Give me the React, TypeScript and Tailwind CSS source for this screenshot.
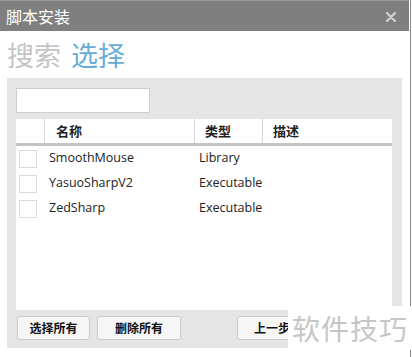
import React from "react";

const rows = [
  { name: "SmoothMouse", type: "Library" },
  { name: "YasuoSharpV2", type: "Executable" },
  { name: "ZedSharp", type: "Executable" },
];

const cjk = "font-['Noto_Sans_CJK_SC',sans-serif]";
const latin = "font-['Open_Sans','Noto_Sans_CJK_SC',sans-serif]";

export default function App() {
  return (
    <div className={`relative w-[412px] h-[357px] bg-white overflow-hidden flex ${cjk}`}>
      <div className="w-[409px] flex flex-col">
        {/* title bar */}
        <div className="h-[31px] bg-[#7f7f7f] border-t border-[#9a9a9a] flex items-center justify-between pl-[6px] pr-[13px]">
          <span className="text-white text-[16px] leading-none">脚本安装</span>
          <svg width="10" height="10" viewBox="0 0 10 10" className="mt-[1px]">
            <path d="M1 1 L9 9 M9 1 L1 9" stroke="#d2d2d2" strokeWidth="2.2" strokeLinecap="round" />
          </svg>
        </div>

        {/* tabs */}
        <div className="h-[47px] flex items-center gap-[10px] pl-[7px] text-[27px] leading-none">
          <span className="text-[#c4c4c4]">搜索</span>
          <span className="text-[#68acd6]">选择</span>
        </div>

        {/* panel */}
        <div className="ml-[7px] w-[395px] h-[270px] bg-[#e5e5e5] pl-[9px] pt-[10px] flex flex-col">
          <div className="w-[134px] h-[25px] bg-white border border-[#cfcfcf]" />

          <div className="mt-[6px] w-[376px] h-[191px] bg-white flex flex-col">
            <div className="h-[27px] flex border-b-[3px] border-[#c4c4c4] text-[13px] font-bold text-[#222]">
              <div className="w-[29px] border-r border-[#d8d8d8]" />
              <div className="w-[150px] border-r border-[#d8d8d8] pl-[11px] flex items-center">名称</div>
              <div className="w-[68px] border-r border-[#d8d8d8] pl-[10px] flex items-center">类型</div>
              <div className="flex-1 pl-[10px] flex items-center">描述</div>
            </div>
            {rows.map((r) => (
              <div key={r.name} className={`h-[25px] flex items-center text-[12.5px] text-[#222] ${latin}`}>
                <div className="w-[29px] pl-[3px]">
                  <div className="w-[18px] h-[18px] border border-[#dcdcdc] bg-white" />
                </div>
                <div className="w-[150px] pl-[4px]">{r.name}</div>
                <div className="w-[68px] pl-[4px]">{r.type}</div>
                <div className="flex-1" />
              </div>
            ))}
          </div>

          <div className="mt-[6px] flex text-[12px] font-bold text-[#111]">
            <button className="w-[73px] h-[24px] ml-[1px] rounded-[3px] border border-[#cccccc] bg-[#f6f6f6]">选择所有</button>
            <button className="w-[84px] h-[24px] ml-[7px] rounded-[3px] border border-[#cccccc] bg-[#f6f6f6]">删除所有</button>
            <button className="w-[84px] h-[24px] ml-[56px] rounded-[3px] border border-[#cccccc] bg-[#f6f6f6] pl-[16px] text-left">上一步</button>
          </div>
        </div>
      </div>
      <div className="w-[1px]" />
      <div className="w-[1px] bg-[#8a8a8a]" />

      {/* watermark */}
      <div className="absolute left-[288px] top-[306px] w-[124px] h-[44px] bg-white flex items-center pl-[4px] text-[28px] text-[#c6c6c6] leading-none tracking-[1px]">
        软件技巧
      </div>
    </div>
  );
}
